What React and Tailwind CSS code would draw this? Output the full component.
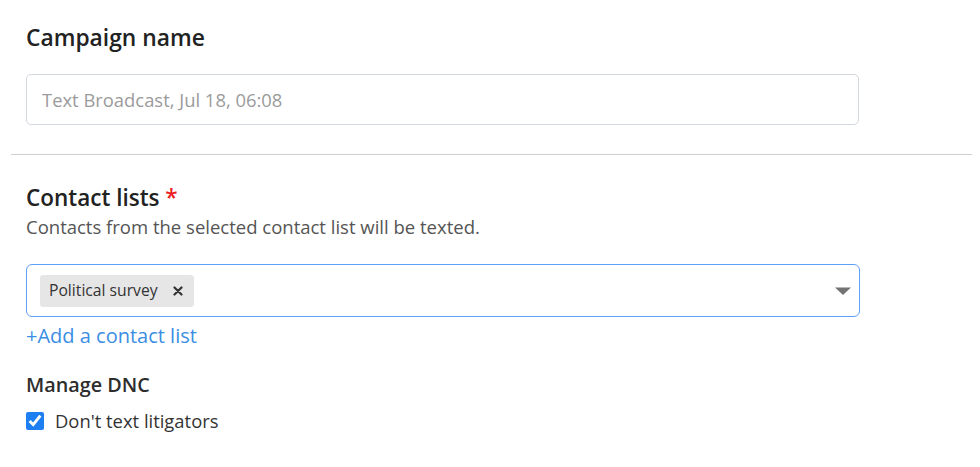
import React, { useState } from 'react';

const App = () => {
  const [noLitigators, setNoLitigators] = useState(true);

  return (
    <div className="w-[980px] h-[467px] bg-white text-[#222] font-['Open_Sans',sans-serif] px-[11px] pt-[24px]">
      {/* Campaign name */}
      <div className="pl-[15px] w-[848px]">
        <h2 className="text-[22.8px] leading-[28px] font-semibold text-[#222]">Campaign name</h2>
        <input
          type="text"
          placeholder="Text Broadcast, Jul 18, 06:08"
          className="mt-[22px] w-[833px] h-[51px] rounded-[5px] border border-[#d3d7de] px-[15px] text-[18.4px] placeholder:text-[#9b9b9b] outline-none"
        />
      </div>

      <div className="mt-[29px] border-t border-[#cfcfcf] w-[961px]" />

      {/* Contact lists */}
      <div className="pl-[15px] pt-[29px]">
        <h2 className="text-[22.5px] leading-[28px] font-semibold text-[#222]">
          Contact lists <span className="text-[#ee1c25]">*</span>
        </h2>
        <p className="mt-[4px] text-[18.5px] leading-[22px] text-[#555]">
          Contacts from the selected contact list will be texted.
        </p>

        <div className="mt-[26px] w-[834px] h-[53px] rounded-[6px] border-[1.5px] border-[#5ea0f7] flex items-center pl-[13px] pr-[6px]">
          <span className="flex items-center h-[32px] rounded-[3px] bg-[#e6e6e6] pl-[9px] pr-[11px] text-[15.7px] text-[#333]">
            Political survey
            <svg className="ml-[15px]" width="10" height="10" viewBox="0 0 10 10">
              <path d="M1.5 1.5 L8.5 8.5 M8.5 1.5 L1.5 8.5" stroke="#333" strokeWidth="2.2" strokeLinecap="round" />
            </svg>
          </span>
          <div className="flex-1" />
          <svg width="18" height="10" viewBox="0 0 18 10" className="mr-[1px]">
            <path d="M1 1.5 H17 L9 9 Z" fill="#737373" />
          </svg>
        </div>

        <a href="#" className="block mt-[6px] text-[20px] leading-[26px] text-[#3b8ee3]">+Add a contact list</a>

        <h3 className="mt-[24px] text-[19.8px] leading-[24px] font-semibold text-[#2d2d2d]">Manage DNC</h3>
        <label className="mt-[12px] flex items-center gap-[11px] text-[18.4px] leading-[24px] text-[#333]">
          <input
            type="checkbox"
            checked={noLitigators}
            onChange={(e) => setNoLitigators(e.target.checked)}
            className="w-[18px] h-[18px] accent-[#1e7ff2]"
          />
          Don't text litigators
        </label>
      </div>
    </div>
  );
};

export default App;
